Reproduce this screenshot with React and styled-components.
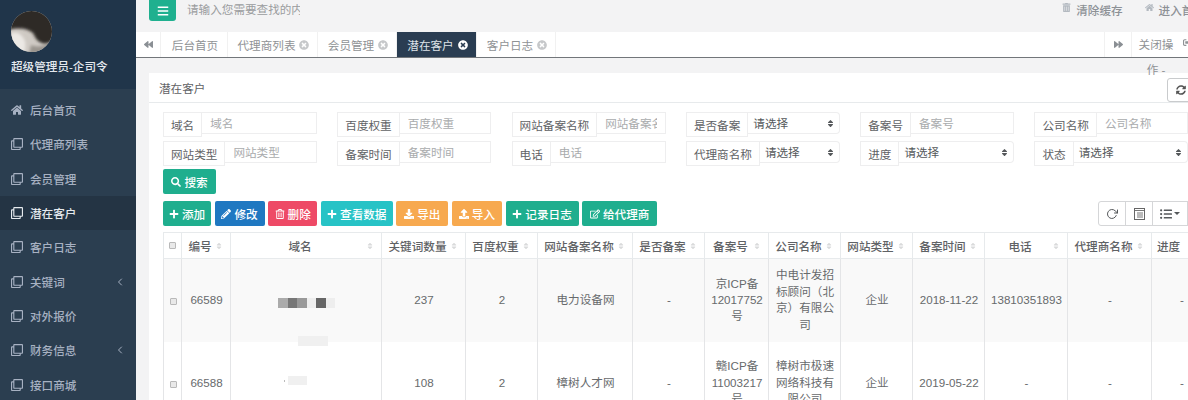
import React from "react";
import styled, { createGlobalStyle } from "styled-components";
import {
  FaBars, FaHome, FaRegClone, FaTrashAlt, FaRegTrashAlt, FaBackward, FaForward,
  FaTimesCircle, FaSignOutAlt, FaSyncAlt, FaSearch, FaPlus, FaPencilAlt, FaDownload, FaUpload,
  FaRegEdit, FaSort, FaListUl,
} from "react-icons/fa";
import { FiRotateCw, FiChevronLeft } from "react-icons/fi";

const GlobalStyle = createGlobalStyle`
  html, body { margin: 0; padding: 0; height: 400px; overflow: hidden; }
  body {
    font-family: "Liberation Sans", "Noto Sans CJK SC", sans-serif;
    font-size: 11.6px;
    color: #676a6c;
    background: #f3f3f4;
    text-spacing-trim: space-all;
  }
  * { box-sizing: border-box; }
`;

const Page = styled.div`
  display: flex;
  width: 1188px;
  height: 400px;
  overflow: hidden;
`;

const Sidebar = styled.aside`
  width: 136px;
  flex: none;
  background: #2b3e50;
  color: #a7b1c2;
`;

const Profile = styled.div`
  height: 89px;
  padding: 11px 0 0 11px;
  background: #20354a;
`;

const Nickname = styled.div`
  margin-top: 4px;
  font-weight: 500;
  color: #e4e9ee;
  white-space: nowrap;
`;

const Nav = styled.nav`
  padding-top: 4px;
`;

const NavItem = styled.div`
  display: flex;
  align-items: center;
  height: 34.3px;
  padding: 0 10px 0 11px;
  gap: 7px;
  font-weight: 500;
  color: ${(p) => (p.$active ? "#e6eaee" : "#a7b1c2")};
  background: ${(p) => (p.$active ? "#243444" : "transparent")};
  svg { flex: none; font-size: 12px; }
`;

const NavLabel = styled.span`
  flex: 1;
`;

const Main = styled.main`
  flex: 1;
  min-width: 0;
  position: relative;
`;

const TopBar = styled.header`
  display: flex;
  align-items: flex-start;
  height: 32px;
  padding-left: 13px;
`;

const MenuButton = styled.div`
  display: flex;
  align-items: center;
  justify-content: center;
  width: 27px;
  height: 21px;
  border-radius: 0 0 3px 3px;
  background: #1fb08f;
  color: #fff;
  font-size: 12px;
`;

const SearchText = styled.div`
  width: 113px;
  margin: 1px 0 0 11px;
  overflow: hidden;
  white-space: nowrap;
  color: #9a9c9e;
`;

const TopLinks = styled.div`
  display: flex;
  margin-left: auto;
  margin-right: -17px;
  padding-top: 2px;
  white-space: nowrap;
  color: #8d9196;
  font-weight: 500;
`;

const TopLink = styled.span`
  display: flex;
  align-items: center;
  gap: 5px;
  margin-right: ${(p) => p.$gap}px;
  svg { color: #b3b9c0; font-size: 9px; margin-top: -5px; }
`;

const TabBar = styled.div`
  display: flex;
  height: 26px;
  background: #fff;
  border-bottom: 1px solid #72767a;
`;

const RollButton = styled.div`
  display: flex;
  align-items: center;
  justify-content: center;
  flex: none;
  width: ${(p) => p.$w}px;
  height: 25px;
  color: #8a8f94;
  font-size: 9px;
  border-right: 1px solid #f1f1f1;
  border-left: ${(p) => (p.$left ? "1px solid #f1f1f1" : "none")};
`;

const Tab = styled.div`
  display: flex;
  align-items: center;
  justify-content: center;
  flex: none;
  gap: 4px;
  width: ${(p) => p.$w}px;
  height: 25px;
  padding-left: 2px;
  border-right: 1px solid #f1f1f1;
  color: ${(p) => (p.$active ? "#dfe4e9" : "#8f9295")};
  background: ${(p) => (p.$active ? "#2a3d52" : "transparent")};
  svg { font-size: 10px; color: ${(p) => (p.$active ? "#fff" : "#c6c8ca")}; }
`;

const TabSpacer = styled.div`
  flex: 1;
`;

const CloseAction = styled.div`
  flex: none;
  width: 50px;
  height: 25px;
  padding: 0 8px 0 6px;
  line-height: 25px;
  text-align: center;
  color: #8f9295;
  position: relative;
  z-index: 2;
`;

const ExitIcon = styled.div`
  flex: none;
  width: 6px;
  height: 25px;
  padding-left: 1px;
  overflow: hidden;
  line-height: 25px;
  color: #8f9295;
  font-size: 9px;
`;

const Content = styled.div`
  padding: 15px 0 0 13px;
`;

const Card = styled.section`
  width: 1060px;
  height: 330px;
  background: #fff;
  overflow: hidden;
`;

const CardTitle = styled.div`
  display: flex;
  align-items: center;
  justify-content: space-between;
  height: 30px;
  padding-left: 10px;
  border-bottom: 1px solid #e7eaec;
  color: #5f6265;
`;

const TitleRefresh = styled.div`
  display: flex;
  align-items: center;
  width: 42px;
  height: 24px;
  margin-top: 5px;
  padding-left: 8px;
  border: 1px solid #c9cbcd;
  border-radius: 3px 0 0 3px;
  color: #555;
  font-size: 10px;
`;

const CardBody = styled.div`
  padding: 9px 0 0 14px;
`;

const FilterGrid = styled.div`
  display: grid;
  grid-template-columns: repeat(6, 154px);
  column-gap: 20.3px;
  row-gap: 4px;
`;

const Field = styled.div`
  display: flex;
  align-items: flex-start;
`;

const FieldLabel = styled.label`
  display: flex;
  align-items: center;
  flex: none;
  height: 25px;
  padding: 0 7px;
  border: 1px solid #eeeeef;
  color: #5f6265;
  white-space: nowrap;
`;

const FieldInput = styled.input`
  flex: 1;
  min-width: 0;
  height: 22px;
  padding: 0 8px;
  border: 1px solid #eeeeef;
  border-left: none;
  outline: none;
  font: inherit;
  &::placeholder { color: #a9abad; opacity: 1; }
`;

const FieldSelect = styled.div`
  display: flex;
  align-items: center;
  justify-content: space-between;
  flex: 1;
  min-width: 0;
  height: 22px;
  padding: 0 4px 0 5px;
  border: 1px solid #eeeeef;
  border-left: none;
  border-radius: 0 4px 4px 0;
  color: #55585b;
  white-space: nowrap;
  svg { font-size: 9px; color: #55585b; flex: none; }
`;

const Button = styled.button`
  display: inline-flex;
  align-items: center;
  justify-content: center;
  flex: none;
  gap: 3px;
  width: ${(p) => p.$w}px;
  height: 25px;
  padding: 0;
  border: none;
  border-radius: 2px;
  background: ${(p) => p.$bg};
  color: #fff;
  font: inherit;
  font-weight: 500;
  svg { font-size: 10px; }
`;

const SearchRow = styled.div`
  margin-top: 3px;
  height: 25px;
`;

const Toolbar = styled.div`
  display: flex;
  align-items: flex-start;
  gap: 3.6px;
  margin-top: 7px;
  height: 25px;
  padding-right: 21px;
`;

const ToolGroup = styled.div`
  display: flex;
  margin-left: auto;
`;

const ToolButton = styled.div`
  display: flex;
  align-items: center;
  justify-content: center;
  gap: 2px;
  width: ${(p) => p.$w}px;
  height: 25px;
  margin-left: -1px;
  border: 1px solid #d5d6d8;
  color: #55585b;
  font-size: 12px;
  &:first-child { border-radius: 3px 0 0 3px; }
`;

const Caret = styled.span`
  width: 0;
  height: 0;
  border: 3px solid transparent;
  border-top-color: #55585b;
  border-bottom: none;
`;

const TableWrap = styled.div`
  margin-top: 6px;
`;

const Table = styled.table`
  width: 988px;
  table-layout: fixed;
  border-collapse: collapse;
`;

const Column = styled.col`
  width: ${(p) => p.$w}px;
`;

const HeadCell = styled.th`
  height: 26px;
  padding: 0 7px 0 5px;
  border: 1px solid #e7eaec;
  font-weight: 500;
  color: #5f6265;
`;

const HeadInner = styled.div`
  display: flex;
  align-items: center;
  white-space: nowrap;
  span { flex: 1; text-align: ${(p) => (p.$left ? "left" : "center")}; }
  svg { flex: none; width: 8px; font-size: 8px; margin-left: 2px; color: #d9dadb; }
`;

const Row = styled.tr`
  height: ${(p) => p.$h}px;
  background: ${(p) => (p.$striped ? "#f9f9f9" : "#fff")};
`;

const Cell = styled.td`
  padding: 0 5px 0 6px;
  border-left: 1px solid #e4e5e7;
  border-right: 1px solid #e4e5e7;
  text-align: center;
  line-height: 16.4px;
  position: relative;
  white-space: ${(p) => (p.$nowrap ? "nowrap" : "normal")};
`;

const CheckBox = styled.span`
  display: block;
  width: 7px;
  height: 7px;
  margin: 0 auto;
  border: 1px solid #b9b9b9;
  border-radius: 1px;
  background: #e9e9e9;
`;

const RowCheck = styled(CheckBox)`
  margin-top: 3px;
`;

const Masked = styled.div`
  display: flex;
  align-items: center;
  justify-content: center;
  margin-top: ${(p) => p.$top}px;
  padding-right: ${(p) => p.$pad}px;
`;

const MaskBlock = styled.i`
  display: block;
  width: ${(p) => p.$w}px;
  height: ${(p) => p.$h}px;
  background: ${(p) => p.$c};
`;

const Smudge = styled.div`
  position: absolute;
  left: 67px;
  bottom: -4px;
  width: 30px;
  height: 10px;
  background: #f0f0f0;
  z-index: 1;
`;

const Avatar = () => (
  <svg width="41" height="41" viewBox="0 0 41 41">
    <defs>
      <clipPath id="avatarClip"><circle cx="20.5" cy="20.5" r="20.5" /></clipPath>
      <filter id="avatarBlur"><feGaussianBlur stdDeviation="1.4" /></filter>
    </defs>
    <g clipPath="url(#avatarClip)">
      <rect width="41" height="41" fill="#cfcac4" />
      <g filter="url(#avatarBlur)">
        <path d="M-3 -3H44V28C38 33 33 34 29 31C26 30 24 26 22 22C17 18 10 16 -3 19Z" fill="#2f2a26" />
        <path d="M0 22C6 20 11 23 14 30C15 35 14 41 12 44H-3Z" fill="#ece9e5" />
        <path d="M20 34C27 37 34 35 44 31V44H18Z" fill="#9a948e" />
      </g>
    </g>
  </svg>
);

const navItems = [
  { label: "后台首页", home: true },
  { label: "代理商列表" },
  { label: "会员管理" },
  { label: "潜在客户", active: true },
  { label: "客户日志" },
  { label: "关键词", more: true },
  { label: "对外报价" },
  { label: "财务信息", more: true },
  { label: "接口商城" },
];

const tabs = [
  { label: "后台首页", w: 67, plain: true },
  { label: "代理商列表", w: 90 },
  { label: "会员管理", w: 79 },
  { label: "潜在客户", w: 80, active: true },
  { label: "客户日志", w: 79 },
];

const filters = [
  { label: "域名", placeholder: "域名" },
  { label: "百度权重", placeholder: "百度权重" },
  { label: "网站备案名称", placeholder: "网站备案名称" },
  { label: "是否备案", select: true },
  { label: "备案号", placeholder: "备案号" },
  { label: "公司名称", placeholder: "公司名称" },
  { label: "网站类型", placeholder: "网站类型" },
  { label: "备案时间", placeholder: "备案时间" },
  { label: "电话", placeholder: "电话" },
  { label: "代理商名称", select: true },
  { label: "进度", select: true },
  { label: "状态", select: true },
];

const actions = [
  { label: "添加", icon: <FaPlus />, bg: "#1fae8e", w: 48 },
  { label: "修改", icon: <FaPencilAlt />, bg: "#1f78c1", w: 50 },
  { label: "删除", icon: <FaRegTrashAlt />, bg: "#ee4a66", w: 49 },
  { label: "查看数据", icon: <FaPlus />, bg: "#27c3c6", w: 72 },
  { label: "导出", icon: <FaDownload />, bg: "#f7a94f", w: 52 },
  { label: "导入", icon: <FaUpload />, bg: "#f7a94f", w: 50 },
  { label: "记录日志", icon: <FaPlus />, bg: "#1fae8e", w: 73 },
  { label: "给代理商", icon: <FaRegEdit />, bg: "#1fae8e", w: 75 },
];

const columns = [
  { w: 18 },
  { w: 49, label: "编号" },
  { w: 151, label: "域名" },
  { w: 84, label: "关键词数量" },
  { w: 72, label: "百度权重" },
  { w: 95, label: "网站备案名称" },
  { w: 72, label: "是否备案" },
  { w: 64, label: "备案号" },
  { w: 72, label: "公司名称" },
  { w: 72, label: "网站类型" },
  { w: 72, label: "备案时间" },
  { w: 83, label: "电话" },
  { w: 84, label: "代理商名称" },
  { w: 60, label: "进度", left: true },
];

const rows = [
  {
    h: 83, striped: true, id: "66589", keywords: "237", weight: "2", site: "电力设备网", filed: "-",
    icp: "京ICP备12017752号", company: "中电计发招标顾问（北京）有限公司", type: "企业",
    date: "2018-11-22", phone: "13810351893", agent: "-", progress: "-",
    mask: [["#ababab", 10, 10], ["#777", 9, 10], ["#999", 10, 10], ["#eee", 9, 10], ["#666", 10, 10], ["#eee", 9, 10]],
    maskTop: 5, maskPad: 0,
  },
  {
    h: 83, id: "66588", keywords: "108", weight: "2", site: "樟树人才网", filed: "-",
    icp: "赣ICP备11003217号", company: "樟树市极速网络科技有限公司", type: "企业",
    date: "2019-05-22", phone: "-", agent: "-", progress: "-",
    mask: [["#bbb", 1, 2], ["#fff", 3, 9], ["#f0f0f0", 19, 9]],
    maskTop: -5, maskPad: 23,
  },
];

export default function App() {
  return (
    <Page>
      <GlobalStyle />
      <Sidebar>
        <Profile>
          <Avatar />
          <Nickname>超级管理员-企司令</Nickname>
        </Profile>
        <Nav>
          {navItems.map((item) => (
            <NavItem key={item.label} $active={item.active}>
              {item.home ? <FaHome /> : <FaRegClone />}
              <NavLabel>{item.label}</NavLabel>
              {item.more && <FiChevronLeft />}
            </NavItem>
          ))}
        </Nav>
      </Sidebar>
      <Main>
        <TopBar>
          <MenuButton><FaBars /></MenuButton>
          <SearchText>请输入您需要查找的内容</SearchText>
          <TopLinks>
            <TopLink $gap={22}><FaTrashAlt />清除缓存</TopLink>
            <TopLink $gap={0}><FaHome />进入首页</TopLink>
          </TopLinks>
        </TopBar>
        <TabBar>
          <RollButton $w={25}><FaBackward /></RollButton>
          {tabs.map((tab) => (
            <Tab key={tab.label} $w={tab.w} $active={tab.active}>
              {tab.label}
              {!tab.plain && <FaTimesCircle />}
            </Tab>
          ))}
          <TabSpacer />
          <RollButton $w={28} $left><FaForward /></RollButton>
          <CloseAction>关闭操作 -</CloseAction>
          <ExitIcon><FaSignOutAlt /></ExitIcon>
        </TabBar>
        <Content>
          <Card>
            <CardTitle>
              潜在客户
              <TitleRefresh><FaSyncAlt /></TitleRefresh>
            </CardTitle>
            <CardBody>
              <FilterGrid>
                {filters.map((f) => (
                  <Field key={f.label}>
                    <FieldLabel>{f.label}</FieldLabel>
                    {f.select ? (
                      <FieldSelect>请选择<FaSort /></FieldSelect>
                    ) : (
                      <FieldInput placeholder={f.placeholder} />
                    )}
                  </Field>
                ))}
              </FilterGrid>
              <SearchRow>
                <Button $w={53} $bg="#1fae8e"><FaSearch />搜索</Button>
              </SearchRow>
              <Toolbar>
                {actions.map((a) => (
                  <Button key={a.label} $w={a.w} $bg={a.bg}>{a.icon}{a.label}</Button>
                ))}
                <ToolGroup>
                  <ToolButton $w={28}><FiRotateCw /></ToolButton>
                  <ToolButton $w={28}>
                    <svg width="11" height="12" viewBox="0 0 11 12">
                      <rect x="0.5" y="0.5" width="10" height="11" fill="#fff" stroke="#666" />
                      <path d="M1 2.5H10M3 5H9M3 7H9M3 9H9" stroke="#777" />
                    </svg>
                  </ToolButton>
                  <ToolButton $w={36}><FaListUl /><Caret /></ToolButton>
                </ToolGroup>
              </Toolbar>
              <TableWrap>
                <Table>
                  <colgroup>
                    {columns.map((c, i) => <Column key={i} $w={c.w} />)}
                  </colgroup>
                  <thead>
                    <tr>
                      {columns.map((c, i) => (
                        <HeadCell key={i}>
                          {c.label ? (
                            <HeadInner $left={c.left}>
                              <span>{c.label}</span>
                              {!c.left && <FaSort />}
                            </HeadInner>
                          ) : (
                            <CheckBox />
                          )}
                        </HeadCell>
                      ))}
                    </tr>
                  </thead>
                  <tbody>
                    {rows.map((r, idx) => (
                      <Row key={r.id} $h={r.h} $striped={r.striped}>
                        <Cell><RowCheck /></Cell>
                        <Cell>{r.id}</Cell>
                        <Cell>
                          <Masked $top={r.maskTop} $pad={r.maskPad}>
                            {r.mask.map(([c, w, h], i) => (
                              <MaskBlock key={i} $c={c} $w={w} $h={h} />
                            ))}
                          </Masked>
                          {idx === 0 && <Smudge />}
                        </Cell>
                        <Cell>{r.keywords}</Cell>
                        <Cell>{r.weight}</Cell>
                        <Cell>{r.site}</Cell>
                        <Cell>{r.filed}</Cell>
                        <Cell>{r.icp}</Cell>
                        <Cell>{r.company}</Cell>
                        <Cell>{r.type}</Cell>
                        <Cell $nowrap>{r.date}</Cell>
                        <Cell $nowrap>{r.phone}</Cell>
                        <Cell>{r.agent}</Cell>
                        <Cell>{r.progress}</Cell>
                      </Row>
                    ))}
                  </tbody>
                </Table>
              </TableWrap>
            </CardBody>
          </Card>
        </Content>
      </Main>
    </Page>
  );
}
